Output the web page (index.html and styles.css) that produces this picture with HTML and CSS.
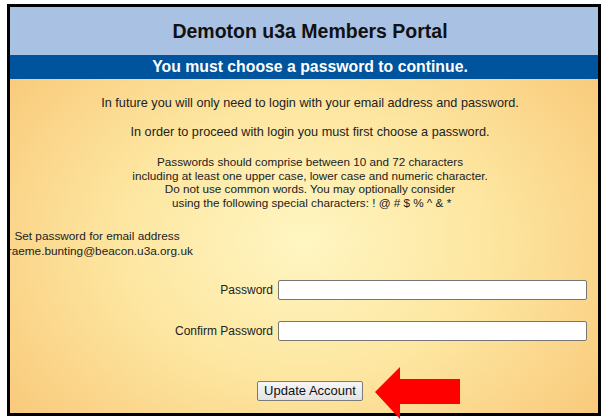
FILE: index.html
```html
<!DOCTYPE html>
<html>
<head>
<meta charset="utf-8">
<link rel="stylesheet" href="styles.css">
</head>
<body>
<div class="frame">
  <div class="header"><h1 class="title">Demoton u3a Members Portal</h1></div>
  <div class="band">You must choose a password to continue.</div>
  <div class="content">
    <p class="p1">In future you will only need to login with your email address and password.</p>
    <p class="p2">In order to proceed with login you must first choose a password.</p>
    <p class="p3">Passwords should comprise between 10 and 72 characters<br>including at least one upper case, lower case and numeric character.<br>Do not use common words. You may optionally consider<br>&nbsp;using the following special characters: ! @ # $ % ^ &amp; *</p>
    <div class="emailbox">Set password for email address<br>graeme.bunting@beacon.u3a.org.uk</div>
    <div class="form">
      <label class="lbl">Password</label><input class="inp" type="password">
      <label class="lbl">Confirm Password</label><input class="inp" type="password">
    </div>
    <div class="actions"><button class="btn">Update Account</button></div>
  </div>
</div>
<svg class="arrow" width="90" height="56" viewBox="0 0 90 56"><polygon points="0,25 25,0 25,12 85,12 85,37 25,37 25,52" fill="#ff0000"/></svg>
</body>
</html>
```
FILE: styles.css
```css
html, body { margin: 0; padding: 0; background: #fff; }
body { font-family: "Liberation Sans", Arial, sans-serif; color: #222; width: 605px; height: 420px; position: relative; overflow: hidden; }
.frame {
  margin: 4px 0 0 7px;
  width: 588px;
  height: 406px;
  border: 3px solid #000;
  overflow: hidden;
  display: flex;
  flex-direction: column;
  background: radial-gradient(ellipse 70% 75% at 50% 58%, #fff6c2 0%, #fde6a0 45%, #f8c474 100%);
}
.header {
  height: 48px;
  padding-left: 12px;
  background: #a9c1e2;
  display: flex;
  align-items: center;
  justify-content: center;
}
.title { margin: 0; font-size: 19.5px; font-weight: bold; color: #111; }
.band {
  height: 24px;
  padding-left: 12px;
  background: #00539d;
  color: #fff;
  font-weight: bold;
  font-size: 15.8px;
  display: flex;
  align-items: center;
  justify-content: center;
}
.content { flex: 1; text-align: center; }
.p1, .p2, .p3 { padding-left: 12px; }
.p1 { margin: 16px 0 0; font-size: 12.7px; line-height: 16px; }
.p2 { margin: 13px 0 0; font-size: 12.7px; line-height: 16px; }
.p3 { margin: 15px 0 0; font-size: 11.7px; line-height: 13.7px; }
.emailbox { margin: 19px 0 0; width: 174px; font-size: 11.8px; line-height: 15px; white-space: nowrap; display: flex; flex-direction: column; align-items: center; }
.form {
  margin-top: 21px;
  display: grid;
  grid-template-columns: 263px 309px;
  column-gap: 5px;
  row-gap: 21px;
  align-items: center;
}
.lbl { text-align: right; font-size: 12px; }
.inp { box-sizing: border-box; width: 309px; height: 20px; margin: 0; border: 1px solid #767676; border-radius: 2px; background: #fff; }
.actions { margin-top: 40px; text-align: left; padding-left: 247px; }
.btn {
  box-sizing: border-box;
  width: 106px; height: 20px;
  font-family: "Liberation Sans", Arial, sans-serif;
  font-size: 13px;
  color: #111;
  background: linear-gradient(#f6f6f6, #e3e3e3);
  border: 1px solid #7a7a7a;
  border-radius: 2px;
  padding: 0;
}
.arrow { position: absolute; left: 375px; top: 367px; }
```
